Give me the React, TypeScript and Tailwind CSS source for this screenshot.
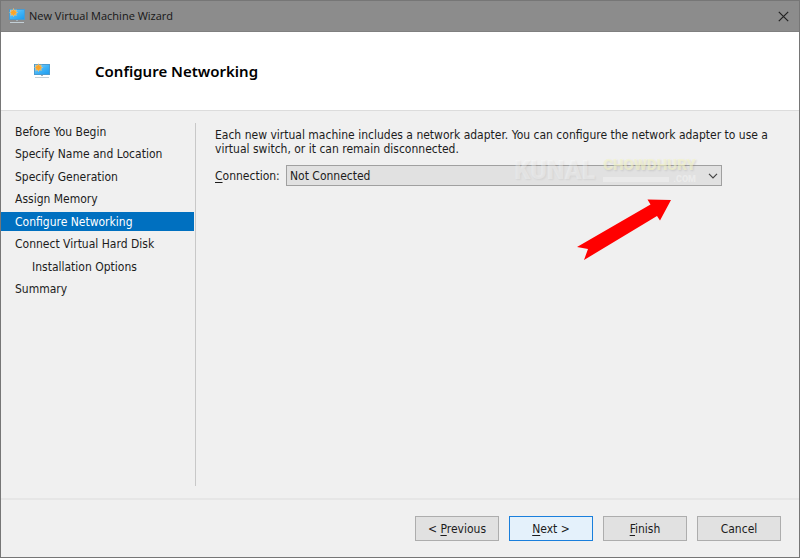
import type { ReactNode } from 'react';

const steps = [
  { label: 'Before You Begin' },
  { label: 'Specify Name and Location' },
  { label: 'Specify Generation' },
  { label: 'Assign Memory' },
  { label: 'Configure Networking', current: true },
  { label: 'Connect Virtual Hard Disk' },
  { label: 'Installation Options', nested: true },
  { label: 'Summary' },
];

function MonitorIcon() {
  return (
    <svg width="16" height="16" viewBox="0 0 16 16" aria-hidden="true">
      <defs>
        <linearGradient id="screen" x1="0" y1="0" x2="1" y2="1">
          <stop offset="0" stopColor="#8fd0f5" />
          <stop offset="0.5" stopColor="#41b4f7" />
          <stop offset="1" stopColor="#1f9df0" />
        </linearGradient>
      </defs>
      <rect x="0" y="1" width="16" height="11" fill="#4a9bd0" />
      <rect x="1" y="2" width="14" height="9" fill="url(#screen)" />
      <rect x="7" y="12" width="2" height="1" fill="#9fb0bb" />
      <rect x="1" y="14" width="14" height="1" fill="#c3cfd6" />
      <path
        d="M4.5 0.5 5.4 2.4 7.4 1.8 6.8 3.7 8.6 4.6 6.8 5.5 7.4 7.4 5.4 6.8 4.5 8.6 3.6 6.8 1.6 7.4 2.2 5.5 0.5 4.6 2.2 3.7 1.6 1.8 3.6 2.4Z"
        fill="#fba528"
        stroke="#ffd596"
        strokeWidth="0.4"
      />
    </svg>
  );
}

function WizardButton({ children, primary }: { children: ReactNode; primary?: boolean }) {
  return (
    <button
      type="button"
      className={
        primary
          ? 'h-[25px] w-[84px] border border-[#1a7fdc] bg-[#e4f1fb] text-center'
          : 'h-[25px] w-[84px] border border-[#adadad] bg-[#e1e1e1] text-center'
      }
    >
      {children}
    </button>
  );
}

export default function App() {
  return (
    <div className="flex min-h-screen flex-col border border-[#767676] bg-[#f0f0f0] font-['DejaVu_Sans_Condensed','DejaVu_Sans',sans-serif] text-[12px] leading-[14px] text-[#1c1c1c]">
      <header className="flex h-[31px] items-center justify-between border-b border-[#808080] bg-[#8c8c8c] pr-2 pl-2">
        <div className="flex items-center gap-1 font-['Open_Sans','Noto_Sans',sans-serif] text-[11px] text-[#161616]">
          <MonitorIcon />
          <span>New Virtual Machine Wizard</span>
        </div>
        <button type="button" aria-label="Close" className="flex size-4 items-center justify-center">
          <svg width="11" height="11" viewBox="0 0 11 11" aria-hidden="true">
            <path d="M0.8 0.8 10.2 10.2M10.2 0.8 0.8 10.2" stroke="#222" strokeWidth="1.2" />
          </svg>
        </button>
      </header>

      <div className="flex h-[79px] items-center gap-[45px] border-b border-[#dcdcdc] bg-white pl-[33px]">
        <MonitorIcon />
        <h1 className="font-['Noto_Sans','Open_Sans',sans-serif] text-[15px] leading-5 font-semibold text-black">
          Configure Networking
        </h1>
      </div>

      <div className="flex flex-1">
        <nav aria-label="Wizard steps" className="w-[194px] shrink-0 pt-[11px]">
          <ol className="grid h-[177px] content-between">
            {steps.map((step) => (
              <li
                key={step.label}
                aria-current={step.current ? 'step' : undefined}
                className={
                  step.current
                    ? 'mr-px flex h-[19px] items-center bg-[#0070c0] pl-[14px] text-white'
                    : step.nested
                      ? 'flex h-[19px] items-center pl-[31px]'
                      : 'flex h-[19px] items-center pl-[14px]'
                }
              >
                {step.label}
              </li>
            ))}
          </ol>
        </nav>
        <div className="mt-3 mb-3 w-px bg-[#c8c8c8]" />

        <main className="flex-1 pt-[17px] pr-[22px] pl-[19px]">
          <p>
            Each new virtual machine includes a network adapter. You can configure the network adapter to use a virtual
            switch, or it can remain disconnected.
          </p>
          <div className="mt-[9px] flex items-center">
            <label htmlFor="connection" className="w-[71px] shrink-0">
              <span className="underline underline-offset-2">C</span>onnection:
            </label>
            <div className="relative mr-[55px] flex-1">
              <select
                id="connection"
                defaultValue="none"
                className="block h-[21px] w-full appearance-none border border-[#a0a0a0] bg-[#e1e1e1] pl-[3px]"
              >
                <option value="none">Not Connected</option>
              </select>
              <svg
                className="pointer-events-none absolute top-2 right-1"
                width="10"
                height="6"
                viewBox="0 0 10 6"
                aria-hidden="true"
              >
                <path d="M1 0.8 5 4.8 9 0.8" fill="none" stroke="#444" strokeWidth="1.2" />
              </svg>
              <div className="pointer-events-none absolute -top-2 right-[26px] flex h-7 gap-2 font-[Roboto,sans-serif] font-black text-white/35">
                <span className="text-[25px] leading-7 [text-shadow:1px_1px_2px_#0000000f]">KUNAL</span>
                <span className="flex flex-col">
                  <span className="text-right text-[15px] leading-4 text-[#f6f6c8]/60 [text-shadow:1px_1px_2px_#0000001a]">
                    CHOWDHURY
                  </span>
                  <span className="flex items-center">
                    <span className="h-[5px] flex-1 bg-white/30" />
                    <span className="pl-1 text-[9px] leading-[12px]">.COM</span>
                  </span>
                </span>
              </div>
              <svg
                className="pointer-events-none absolute top-[34px] right-[51px]"
                width="96"
                height="62"
                viewBox="0 0 96 62"
                aria-hidden="true"
              >
                <path d="M72.5 0.5 96 1 85 21.5 82 17 9 61 13 50 2 48 75.5 5.5Z" fill="#ff0000" />
              </svg>
            </div>
          </div>
        </main>
      </div>

      <footer className="flex h-[59px] items-center justify-end gap-[10px] border-t-2 border-[#e6e6e6] pr-[18px]">
        <WizardButton>
          &lt; <span className="underline underline-offset-2">P</span>revious
        </WizardButton>
        <WizardButton primary>
          <span className="underline underline-offset-2">N</span>ext &gt;
        </WizardButton>
        <WizardButton>
          <span className="underline underline-offset-2">F</span>inish
        </WizardButton>
        <WizardButton>Cancel</WizardButton>
      </footer>
    </div>
  );
}
